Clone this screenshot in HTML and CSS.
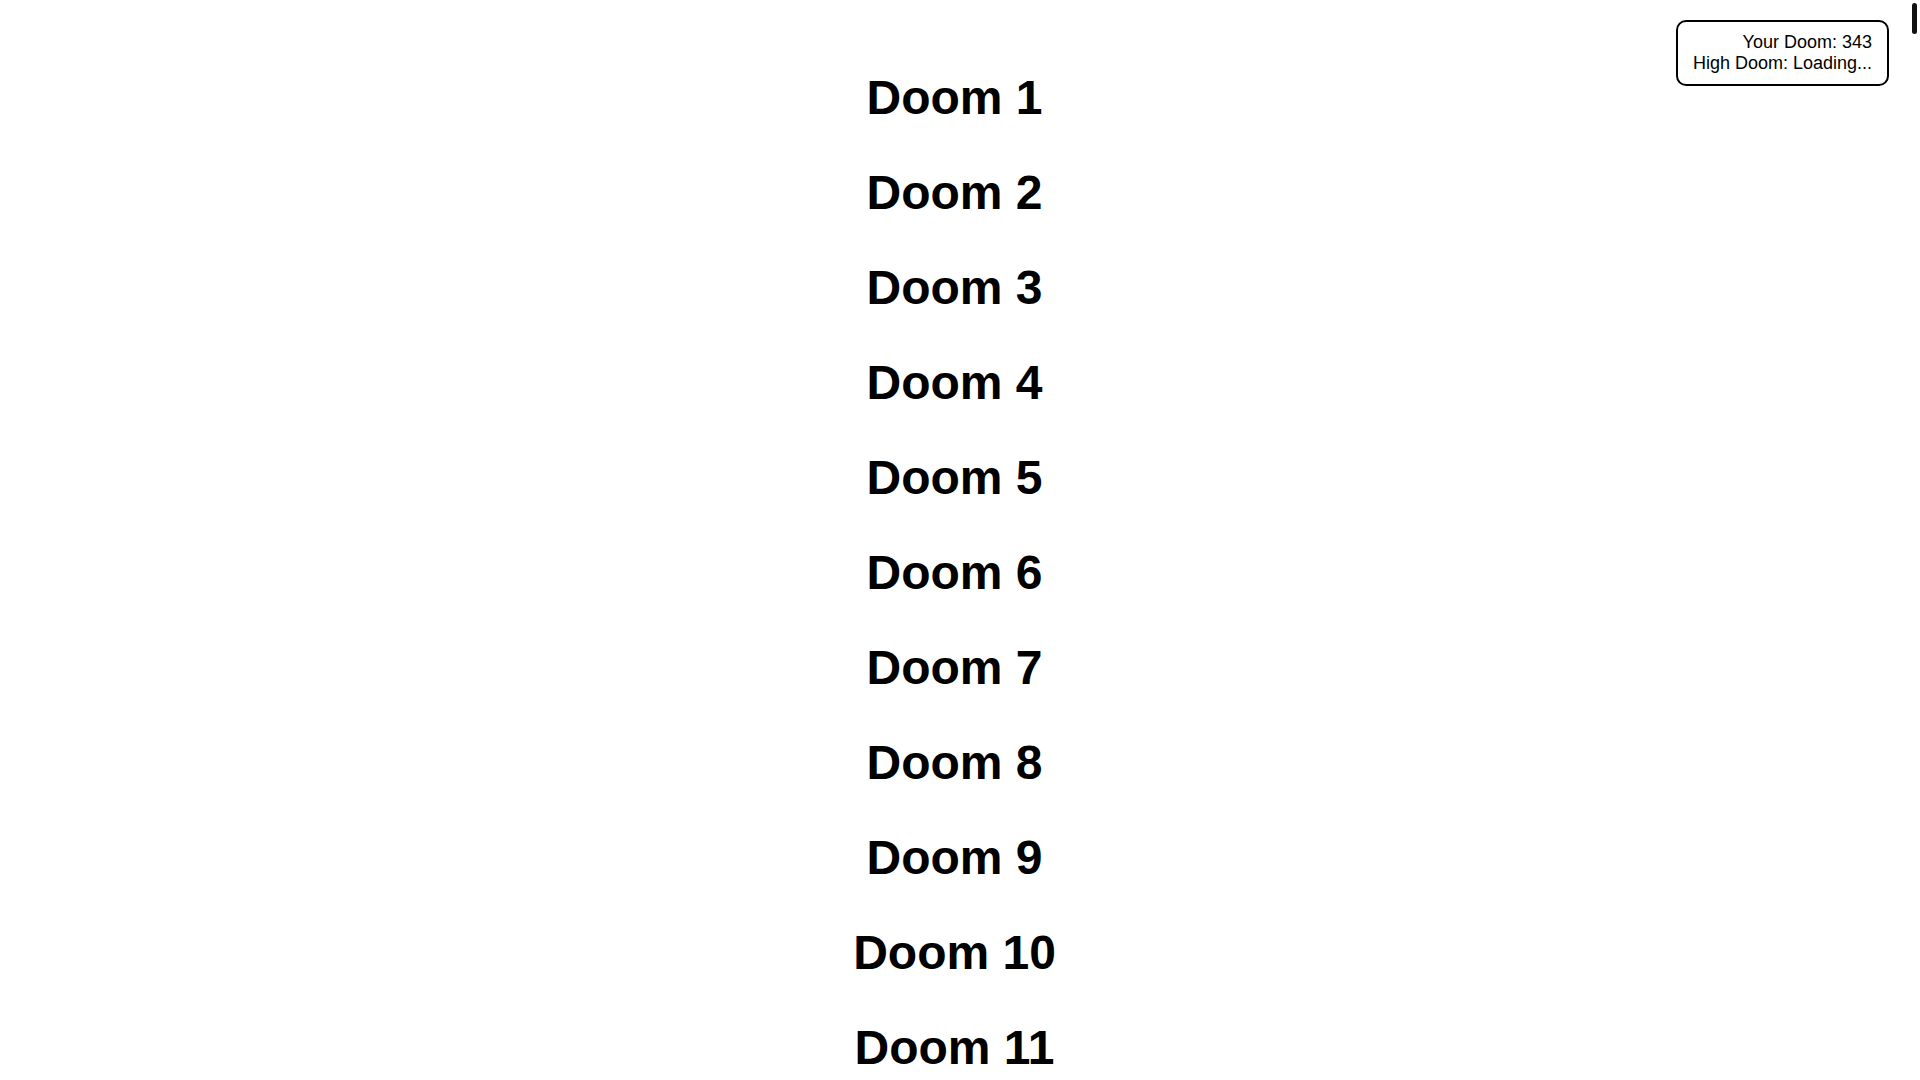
FILE: index.html
```html
<!DOCTYPE html>
<html lang="en">
<head>
<meta charset="utf-8">
<title>Doom Scroll</title>
<link rel="stylesheet" href="styles.css">
</head>
<body>
<div class="app">
  <div class="content">
    <div class="score-box">
      <div class="score-line">Your Doom: 343</div>
      <div class="score-line">High Doom: Loading...</div>
    </div>
    <main class="doom-list">
      <h1 class="doom-item">Doom 1</h1>
      <h1 class="doom-item">Doom 2</h1>
      <h1 class="doom-item">Doom 3</h1>
      <h1 class="doom-item">Doom 4</h1>
      <h1 class="doom-item">Doom 5</h1>
      <h1 class="doom-item">Doom 6</h1>
      <h1 class="doom-item">Doom 7</h1>
      <h1 class="doom-item">Doom 8</h1>
      <h1 class="doom-item">Doom 9</h1>
      <h1 class="doom-item">Doom 10</h1>
      <h1 class="doom-item">Doom 11</h1>
      <h1 class="doom-item">Doom 12</h1>
    </main>
  </div>
  <div class="scroll-rail">
    <div class="scroll-thumb"></div>
  </div>
</div>
</body>
</html>
```
FILE: styles.css
```css
html,
body {
  margin: 0;
  padding: 0;
  background: #ffffff;
}

body {
  font-family: "Liberation Sans", Arial, sans-serif;
  color: #000000;
}

.app {
  display: flex;
  height: 100vh;
  overflow: hidden;
}

.content {
  position: relative;
  flex: 1;
  min-width: 0;
  padding: 8px;
  overflow: hidden;
}

.scroll-rail {
  width: 11px;
  flex: none;
  padding: 3px 3px 0 3px;
  box-sizing: border-box;
  background: #ffffff;
}

.scroll-thumb {
  height: 31px;
  background: #111111;
  border-radius: 3px;
}

.doom-list {
  display: flex;
  flex-direction: column;
  align-items: center;
  gap: 40px;
  padding-top: 62px;
}

.doom-item {
  margin: 0;
  font-size: 48px;
  font-weight: 700;
  line-height: normal;
  text-align: center;
  white-space: nowrap;
}

.score-box {
  position: absolute;
  top: 20px;
  right: 20px;
  padding: 10px 15px;
  border: 2px solid #000000;
  border-radius: 10px;
  background: #ffffff;
  font-size: 18px;
  text-align: right;
  z-index: 10;
}

.score-line {
  line-height: normal;
}
```
